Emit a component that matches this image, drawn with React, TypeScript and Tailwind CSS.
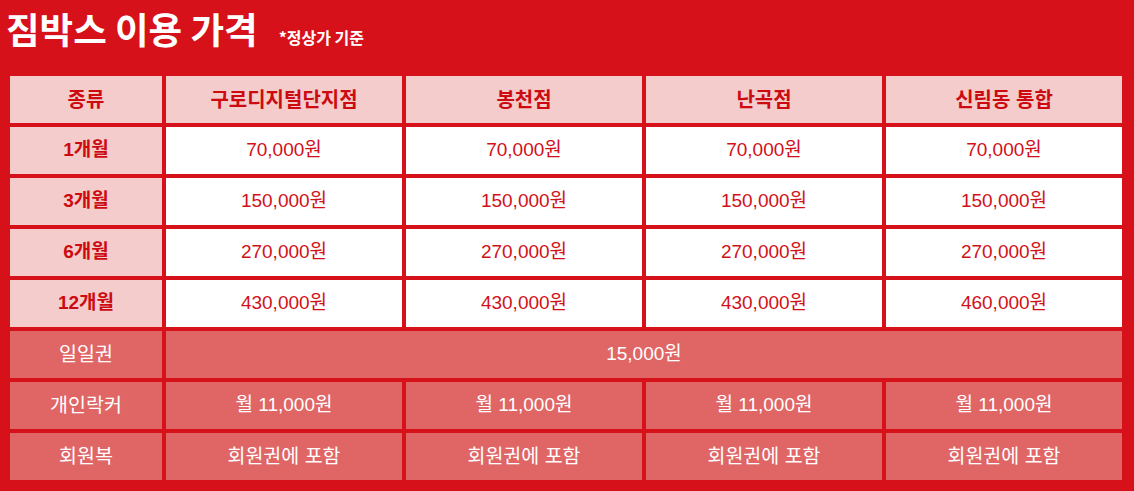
import React from "react";

const font = { fontFamily: '"Liberation Sans", "Noto Sans CJK KR", sans-serif' };

const branches = ["구로디지털단지점", "봉천점", "난곡점", "신림동 통합"];
const rows: [string, string[]][] = [
  ["1개월", ["70,000원", "70,000원", "70,000원", "70,000원"]],
  ["3개월", ["150,000원", "150,000원", "150,000원", "150,000원"]],
  ["6개월", ["270,000원", "270,000원", "270,000원", "270,000원"]],
  ["12개월", ["430,000원", "430,000원", "430,000원", "460,000원"]],
];

const cell = "flex items-center justify-center";

export default function App() {
  return (
    <div className="w-[1134px] h-[491px] bg-[#d7111a] overflow-hidden" style={font}>
      <div className="h-[76px] pt-[10px] pl-[6px] flex items-baseline">
        <span className="text-[36.5px] leading-[38px] font-bold text-white" style={{ fontFamily: '"Noto Sans CJK KR", sans-serif' }}>
          짐박스 이용 가격
        </span>
        <span className="ml-[21px] text-[16px] font-bold text-white" style={{ fontFamily: '"Noto Sans CJK KR", sans-serif' }}>
          *정상가 기준
        </span>
      </div>
      <div className="ml-[10px] grid grid-cols-[152px_236px_236px_236px_236px] auto-rows-[47px] gap-[4px] w-[1112px]">
        <div className={`${cell} bg-[#f4cccc] text-[#cc0a10] font-bold text-[20px]`}>종류</div>
        {branches.map((b) => (
          <div key={b} className={`${cell} bg-[#f4cccc] text-[#cc0a10] font-bold text-[20px]`}>
            {b}
          </div>
        ))}
        {rows.map(([label, prices]) => (
          <React.Fragment key={label}>
            <div className={`${cell} bg-[#f4cccc] text-[#cc0a10] font-bold text-[19px]`}>{label}</div>
            {prices.map((p, i) => (
              <div key={i} className={`${cell} bg-white text-[#d2101a] text-[19px]`}>
                {p}
              </div>
            ))}
          </React.Fragment>
        ))}
        <div className={`${cell} bg-[#e06666] text-white text-[19.5px]`}>일일권</div>
        <div className={`${cell} col-span-4 bg-[#e06666] text-white text-[19px]`}>15,000원</div>
        <div className={`${cell} bg-[#e06666] text-white text-[19.5px]`}>개인락커</div>
        {[0, 1, 2, 3].map((i) => (
          <div key={i} className={`${cell} bg-[#e06666] text-white text-[19px]`}>
            월 11,000원
          </div>
        ))}
        <div className={`${cell} bg-[#e06666] text-white text-[19.5px]`}>회원복</div>
        {[0, 1, 2, 3].map((i) => (
          <div key={i} className={`${cell} bg-[#e06666] text-white text-[19.5px]`}>
            회원권에 포함
          </div>
        ))}
      </div>
    </div>
  );
}
